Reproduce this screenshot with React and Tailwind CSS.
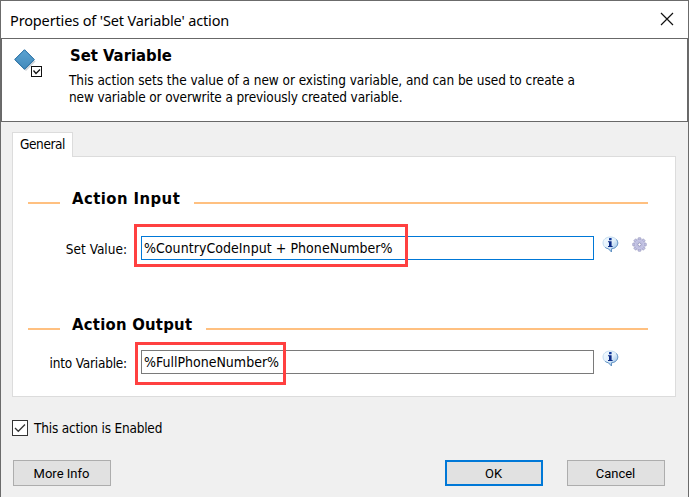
const tahoma = "font-['DejaVu_Sans_Condensed','DejaVu_Sans',sans-serif] [font-stretch:condensed]";
const ui = "font-['Noto_Sans','Open_Sans',sans-serif]";

function InfoIcon() {
  return (
    <svg width="17" height="17" viewBox="0 0 17 17" className="block shrink-0">
      <defs>
        <linearGradient id="bubble" x1="0" y1="0" x2="1" y2="1">
          <stop offset="0" stopColor="#f4fbff" />
          <stop offset=".5" stopColor="#e2f0fb" />
          <stop offset="1" stopColor="#7fb0e0" />
        </linearGradient>
      </defs>
      <path d="M8.300 1C4 1 1 3.500 1 7c0 3 2.200 5.300 5.500 5.800L9.500 16v-3.200C13.300 12.400 15.800 10 15.800 7c0-3.500-3.200-6-7.500-6z" fill="url(#bubble)" stroke="#b4d2ea" strokeWidth=".8" />
      <path d="M14.500 3.500c2 2.800 1.600 6-1.300 8.100-1 .7-2.200 1-3.700 1.200V16l-3-3.200c-1.300-.2-2.400-.7-3.300-1.400" fill="none" stroke="#5b8cc0" strokeWidth=".9" />
      <rect x="7" y="2" width="2.600" height="2.200" rx=".5" fill="#123a9c" />
      <path d="M6 5.300h3.600V10h1v1H6v-1h1V6.300H6z" fill="#0b2a86" />
    </svg>
  );
}

function GearIcon() {
  const teeth = [0, 45, 90, 135, 180, 225, 270, 315];
  return (
    <svg width="15" height="15" viewBox="0 0 15 15" className="mt-px block shrink-0">
      {teeth.map((a) => (
        <rect key={a} x="6" y=".7" width="3" height="3" rx=".7" fill="#c3c3e2" stroke="#8e8eb8" strokeWidth=".6" transform={`rotate(${a} 7.500 7.500)`} />
      ))}
      <circle cx="7.500" cy="7.500" r="5" fill="#c9c9e8" stroke="#9d9dc6" strokeWidth=".5" />
      <circle cx="7.500" cy="7.500" r="3.200" fill="#d2d2ee" stroke="#adadd2" strokeWidth=".6" />
      <circle cx="7.500" cy="7.500" r="1.700" fill="#fff" stroke="#7777a8" strokeWidth=".8" />
    </svg>
  );
}

function ActionIcon() {
  return (
    <svg width="30" height="30" viewBox="0 0 30 30" className="block">
      <defs>
        <linearGradient id="blue" x1="0" y1="0" x2="0" y2="1">
          <stop offset="0" stopColor="#5ba3d2" />
          <stop offset="1" stopColor="#428abb" />
        </linearGradient>
      </defs>
      <path d="M11 2.500 21.500 12.500 12 22 2 12.500z" fill="#b9c0c8" opacity=".7" />
      <path d="M10.500 .7 20.300 10.500 10.500 20.300 .7 10.500z" fill="url(#blue)" stroke="#17649c" />
      <rect x="17.500" y="17.500" width="10" height="10" fill="#fff" stroke="#111" />
      <path d="m19.500 21.500 2.500 3 4-4" fill="none" stroke="#111" strokeWidth="1.300" />
    </svg>
  );
}

function SectionTitle({ children, width }) {
  return (
    <div className="flex h-5 items-center">
      <div className="mt-[9px] h-[2px] w-8 bg-[#ffc080]" />
      <h2 className={`${width} ${tahoma} ml-3 whitespace-nowrap pt-[2px] text-[16.500px] font-bold leading-5`}>{children}</h2>
      <div className="mt-[9px] h-[2px] flex-1 bg-[#ffc080]" />
    </div>
  );
}

function Button({ children, primary }) {
  return (
    <button
      className={`h-[26px] w-[98px] bg-[#e1e1e1] pt-px pr-px font-['Roboto',sans-serif] text-[13px] leading-none ${
        primary ? "border-2 border-[#0078d7]" : "border border-[#adadad]"
      }`}
    >
      {children}
    </button>
  );
}

export default function App() {
  return (
    <div className="flex h-[497px] w-[689px] flex-col overflow-hidden border-x border-t border-[#6b6b6b] bg-[#f0f0f0] text-black">
      <header className="flex h-[37px] items-center justify-between bg-white pl-[9px] pr-[14px]">
        <h1 className={`${ui} whitespace-nowrap text-[14.500px] leading-5 tracking-[-0.14px]`}>Properties of 'Set Variable' action</h1>
        <svg width="14" height="14" viewBox="0 0 14 14" className="-mt-[2px]">
          <path d="m1 1 12 12M13 1 1 13" stroke="#111" strokeWidth="1.200" />
        </svg>
      </header>
      <section className="flex h-[84px] border border-[#686868] bg-white">
        <div className="ml-[12px] mt-[10px] w-[56px]">
          <ActionIcon />
        </div>
        <div className="pt-[7px]">
          <h2 className={`${tahoma} text-[16.500px] font-bold leading-5`}>Set Variable</h2>
          <p className={`${tahoma} -ml-px mt-[6px] whitespace-nowrap text-[13.500px] leading-[17px] tracking-[-0.05px]`}>
            This action sets the value of a new or existing variable, and can be used to create a<br />
            <span className="tracking-[-0.12px]">new variable or overwrite a previously created variable.</span>
          </p>
        </div>
      </section>
      <main className="flex flex-col pl-[11px] pt-[10px]">
        <div className={`${tahoma} z-10 -mb-px h-[25px] w-[61px] border border-b-0 border-[#dcdcdc] bg-white pl-[7px] text-[13.500px] leading-[23px] tracking-[-0.4px]`}>General</div>
        <div className="h-[241px] w-[664px] border border-[#dcdcdc] bg-white pl-[15px] pr-[27px] pt-[31px]">
          <SectionTitle width="w-[122px] tracking-[0.45px]">Action Input</SectionTitle>
          <div className="relative mt-[28px] flex h-[25px]">
            <label className={`${tahoma} w-[99px] whitespace-nowrap text-right text-[13.500px] leading-[27px]`}>Set Value:</label>
            <div className={`${tahoma} ml-[14px] h-6 w-[453px] border border-[#0078d7] pl-[2px] text-[14px] leading-[22px] tracking-[0.05px]`}>%CountryCodeInput + PhoneNumber%</div>
            <div className="ml-2 flex gap-[13px]"><InfoIcon /><GearIcon /></div>
            <div className="absolute left-[106px] top-[-12px] h-[43px] w-[274px] border-[3px] border-[#ff4040]" />
          </div>
          <div className="mt-[53px]">
            <SectionTitle width="w-[134px] tracking-[0.25px]">Action Output</SectionTitle>
          </div>
          <div className="relative mt-[16px] flex h-[25px]">
            <label className={`${tahoma} w-[99px] whitespace-nowrap text-right text-[13.500px] leading-[27px] tracking-[-0.2px]`}>into Variable:</label>
            <div className={`${tahoma} ml-[14px] h-6 w-[453px] border border-[#7a7a7a] pl-[2px] text-[14px] leading-[22px]`}>%FullPhoneNumber%</div>
            <div className="ml-2"><InfoIcon /></div>
            <div className="absolute left-[107px] top-[-8px] h-[43px] w-[151px] border-[3px] border-[#ff4040]" />
          </div>
        </div>
        <div className="mt-[23px] flex h-4 items-center gap-[6px]">
          <svg width="16" height="16" viewBox="0 0 16 16">
            <rect x=".5" y=".5" width="15" height="15" fill="#fff" stroke="#333" />
            <path d="m3 8 3.300 3.300 6.700-6.800" fill="none" stroke="#333" strokeWidth="1.300" />
          </svg>
          <span className={`${tahoma} text-[13.500px] leading-4 tracking-[-0.2px]`}>This action is Enabled</span>
        </div>
      </main>
      <footer className="mt-6 flex pl-3">
        <Button>More Info</Button>
        <div className="ml-[334px] flex gap-6">
          <Button primary>OK</Button>
          <Button>Cancel</Button>
        </div>
      </footer>
    </div>
  );
}
